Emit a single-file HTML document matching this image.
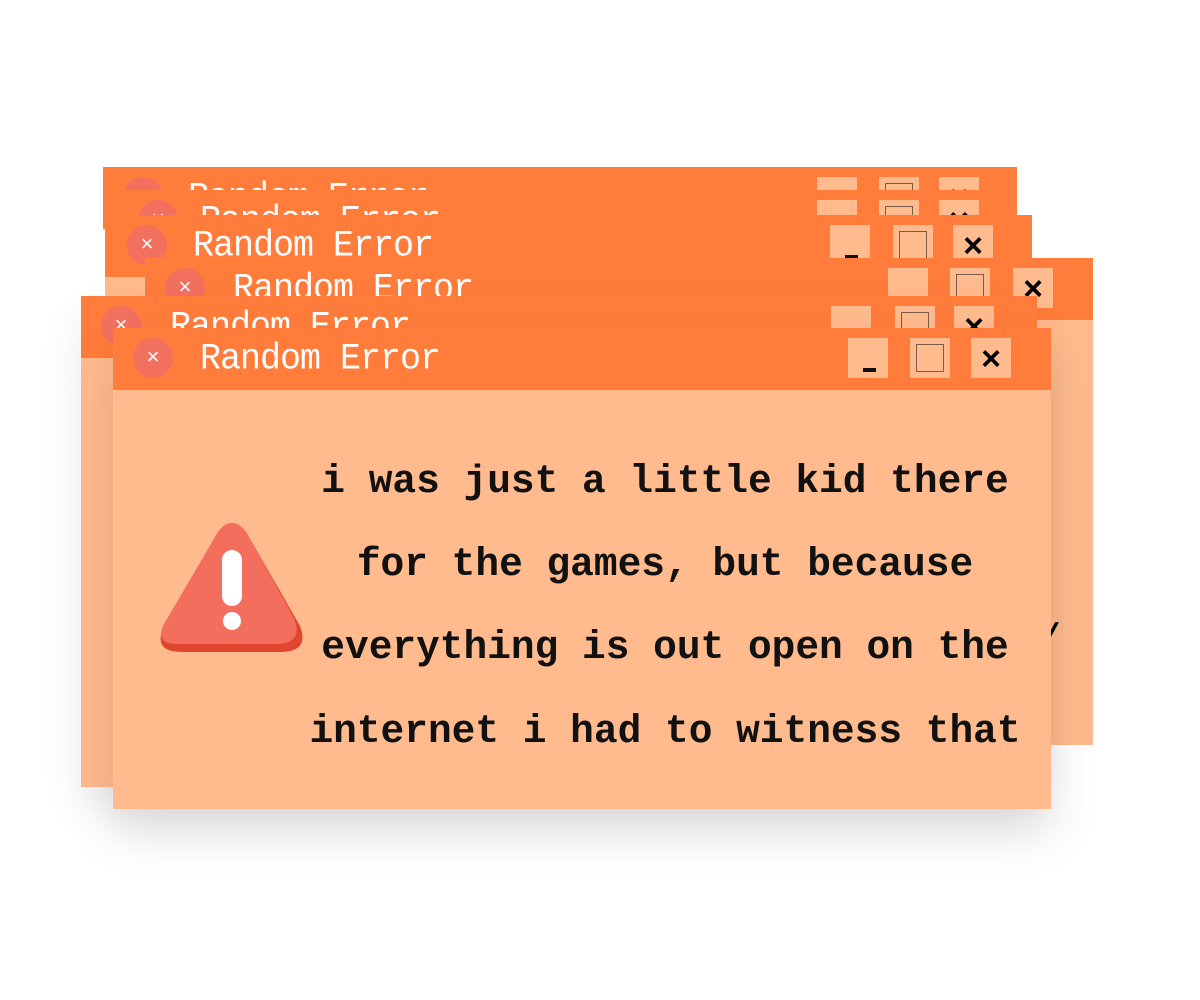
<!DOCTYPE html>
<html><head><style>
body{margin:0;width:1200px;height:1000px;background:#fff;position:relative;overflow:hidden;font-family:"Liberation Mono",monospace}
.w{position:absolute}
.t{position:absolute;left:0;right:0;top:0;height:62px;background:#ff7c3b}
.b{position:absolute;left:0;right:0;top:62px;bottom:0;background:#ffbb8e}
.c{position:absolute;top:10px;width:40px;height:40px;border-radius:50%;background:#f3705f;color:#fff;font:22px "Liberation Sans",sans-serif;text-align:center;line-height:38px}
.tx{position:absolute;top:11px;color:#fff;font-size:35px;line-height:40px;letter-spacing:-1px;transform:scaleY(1.05)}
.bt{position:absolute;top:10px;width:40px;height:40px;background:#ffbb8e}
.mn::after{content:"";position:absolute;left:15px;top:30px;width:13px;height:4px;background:#111}
.mx::after{content:"";position:absolute;left:6px;top:6px;width:26px;height:26px;border:1px solid #7a5a48}
.cl{font:bold 34px "Liberation Sans",sans-serif;color:#000;text-align:center;line-height:42px}
.msg{position:absolute;left:280px;width:770px;text-align:center;font-weight:bold;font-size:39.5px;color:#111}
</style></head><body>

<div class="w" style="left:103px;top:167px;width:914px;height:300px">
 <div class="t"><div class="c" style="left:20px">×</div><div class="tx" style="left:85px">Random Error</div>
 <div class="bt mn" style="right:160px"></div><div class="bt mx" style="right:98px"></div><div class="bt cl" style="right:38px">×</div></div>
</div>
<div class="w" style="left:105px;top:190px;width:912px;height:300px">
 <div class="t"><div class="c" style="left:33px">×</div><div class="tx" style="left:95px">Random Error</div>
 <div class="bt mn" style="right:160px"></div><div class="bt mx" style="right:98px"></div><div class="bt cl" style="right:38px">×</div></div>
</div>
<div class="w" style="left:105px;top:215px;width:927px;height:300px">
 <div class="b"></div>
 <div class="t"><div class="c" style="left:22px">×</div><div class="tx" style="left:88px">Random Error</div>
 <div class="bt mn" style="right:162px"></div><div class="bt mx" style="right:99px"></div><div class="bt cl" style="right:39px">×</div></div>
</div>
<div class="w" style="left:145px;top:258px;width:948px;height:487px">
 <div class="b"><div style="position:absolute;left:895px;top:300px;font-size:34px;font-weight:bold">/</div></div>
 <div class="t"><div class="c" style="left:20px">×</div><div class="tx" style="left:88px">Random Error</div>
 <div class="bt mn" style="right:165px"></div><div class="bt mx" style="right:103px"></div><div class="bt cl" style="right:40px">×</div></div>
</div>
<div class="w" style="left:81px;top:296px;width:956px;height:491px;box-shadow:0 20px 40px rgba(0,0,0,0.08)">
 <div class="b"></div>
 <div class="t"><div class="c" style="left:20px">×</div><div class="tx" style="left:89px">Random Error</div>
 <div class="bt mn" style="right:166px"></div><div class="bt mx" style="right:102px"></div><div class="bt cl" style="right:43px">×</div></div>
</div>
<div class="w" style="left:113px;top:328px;width:938px;height:481px;box-shadow:0 25px 45px rgba(0,0,0,0.12)">
 <div class="b"></div>
 <div class="t"><div class="c" style="left:20px">×</div><div class="tx" style="left:87px">Random Error</div>
 <div class="bt mn" style="right:163px"></div><div class="bt mx" style="right:101px"></div><div class="bt cl" style="right:40px">×</div></div>
</div>

<svg style="position:absolute;left:158px;top:520px" width="148" height="136" viewBox="0 0 148 136">
 <path d="M60 12 Q74 -6 88 12 L142 106 Q152 132 122 132 L24 132 Q-6 132 6 106 Z" fill="#e0452e"/>
 <path d="M60 12 Q74 -6 88 12 L136 98 Q146 124 118 124 L20 124 Q-4 124 6 104 Z" fill="#f36e5c"/>
 <rect x="64" y="30" width="20" height="56" rx="10" fill="#fff"/>
 <circle cx="74" cy="101" r="9" fill="#fff"/>
</svg>

<div class="msg" style="top:459px">i was just a little kid there</div>
<div class="msg" style="top:542px">for the games, but because</div>
<div class="msg" style="top:625px">everything is out open on the</div>
<div class="msg" style="top:709px">internet i had to witness that</div>
</body></html>
